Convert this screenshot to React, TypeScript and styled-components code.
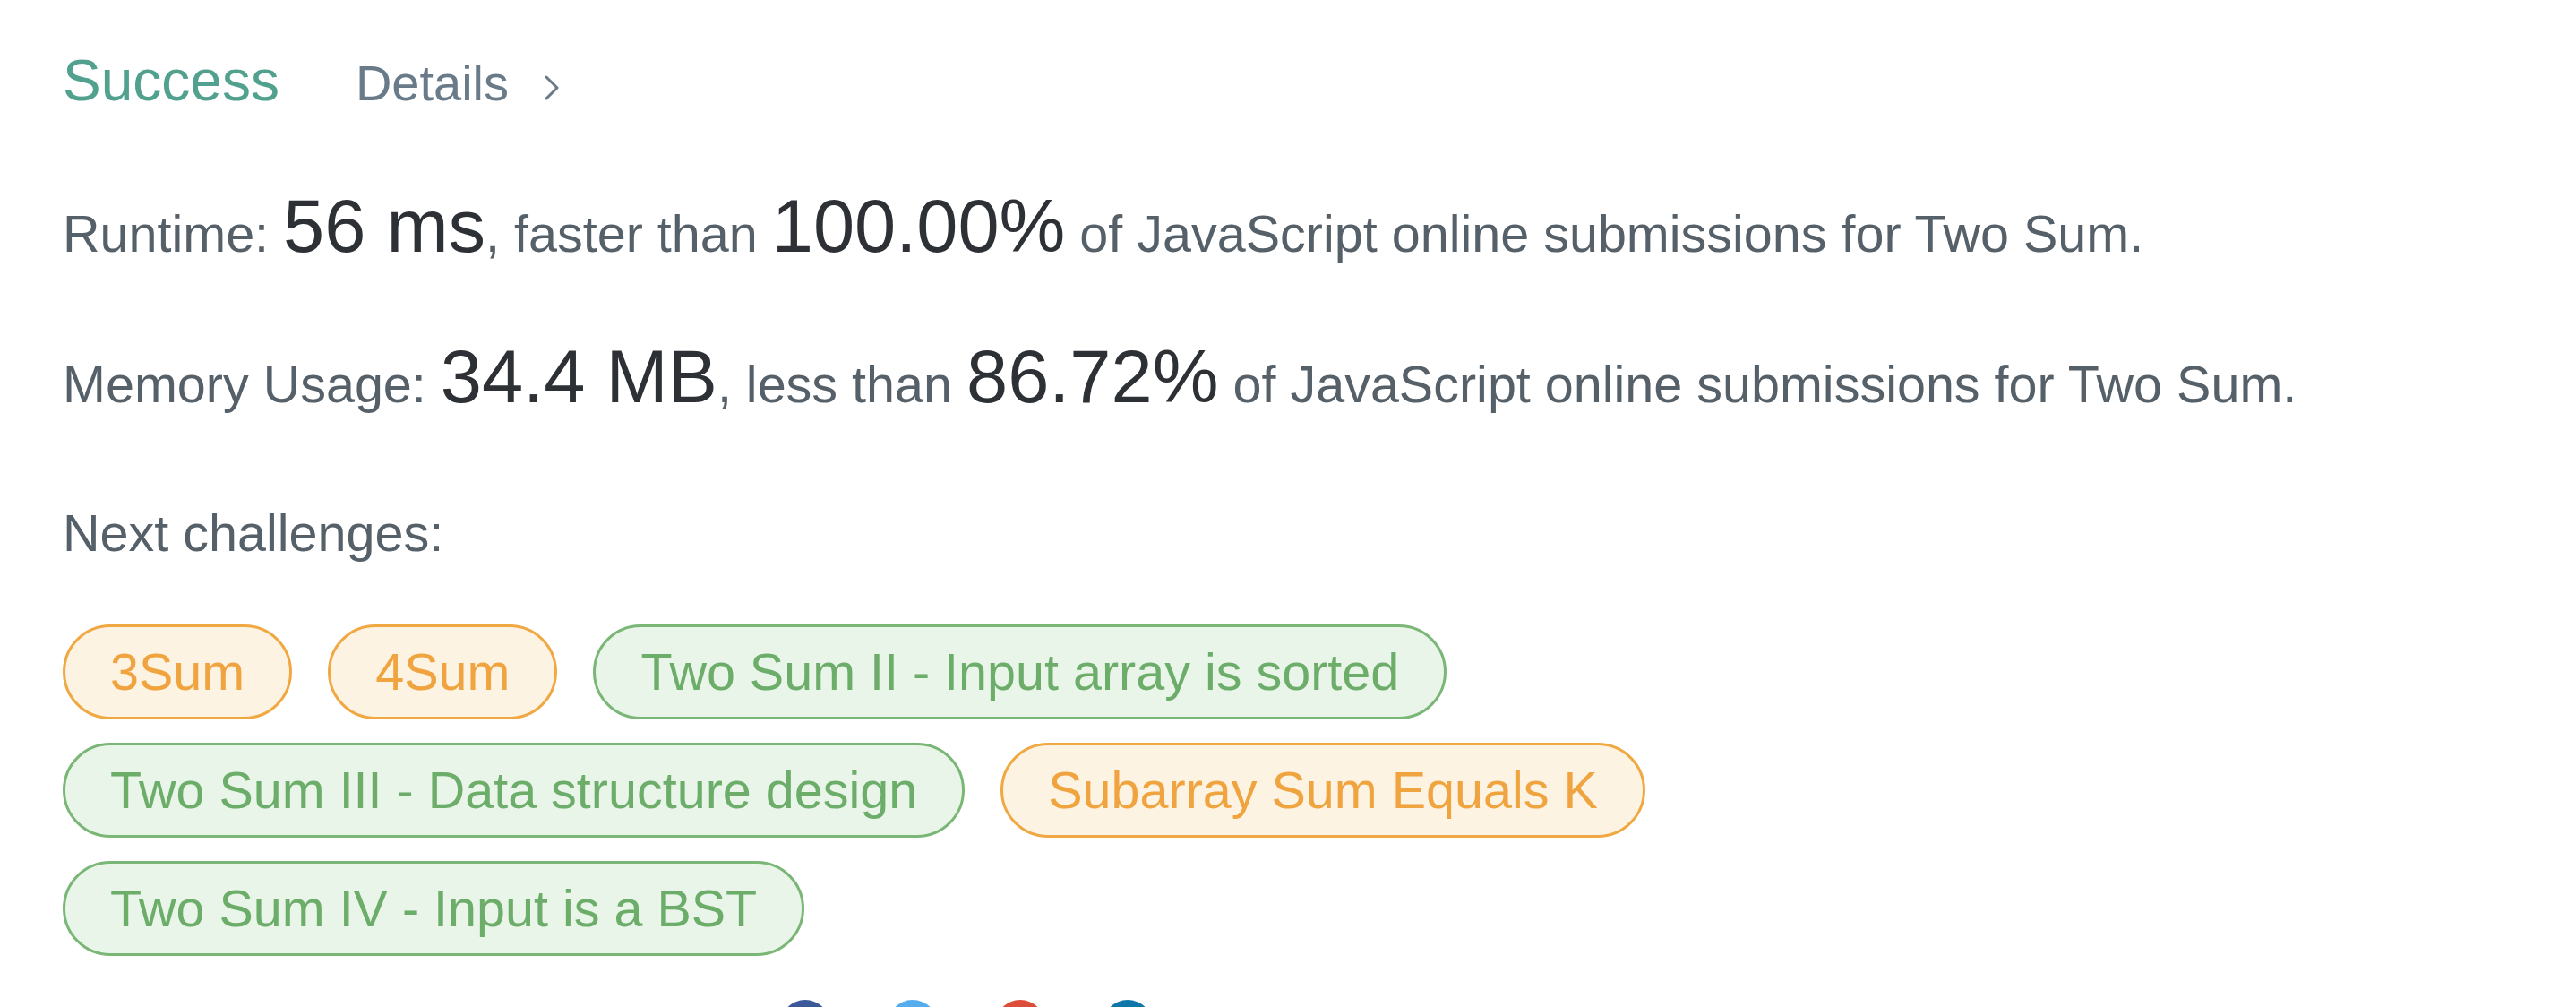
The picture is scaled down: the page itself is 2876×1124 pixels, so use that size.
import styled, { createGlobalStyle } from "styled-components";
import { FaFacebookF, FaTwitter, FaGooglePlusG, FaLinkedinIn } from "react-icons/fa";

type Level = "easy" | "medium";

const challenges: { title: string; level: Level }[] = [
  { title: "3Sum", level: "medium" },
  { title: "4Sum", level: "medium" },
  { title: "Two Sum II - Input array is sorted", level: "easy" },
  { title: "Two Sum III - Data structure design", level: "easy" },
  { title: "Subarray Sum Equals K", level: "medium" },
  { title: "Two Sum IV - Input is a BST", level: "easy" },
];

const shares = [
  { Icon: FaFacebookF, color: "#3b5998" },
  { Icon: FaTwitter, color: "#55acee" },
  { Icon: FaGooglePlusG, color: "#dd4b39" },
  { Icon: FaLinkedinIn, color: "#0e76a8" },
];

const palette = {
  easy: { border: "#7ab777", text: "#6cad6a", bg: "#eaf5ea" },
  medium: { border: "#f0a843", text: "#f0a440", bg: "#fdf3e2" },
};

export default function App() {
  return (
    <>
      <GlobalStyle />
      <Page>
        <Header>
          <Status>Success</Status>
          <DetailsLink>
            Details
            <Chevron viewBox="0 0 16 28">
              <polyline points="2,2 14,14 2,26" />
            </Chevron>
          </DetailsLink>
        </Header>

        <Stat>
          Runtime: <Big>56 ms</Big>, faster than <Big>100.00%</Big> of
          JavaScript online submissions for Two Sum.
        </Stat>
        <Stat>
          Memory Usage: <Big>34.4 MB</Big>, less than <Big>86.72%</Big> of
          JavaScript online submissions for Two Sum.
        </Stat>
        <Stat>Next challenges:</Stat>

        <TagList>
          {challenges.map((c) => (
            <Tag key={c.title} level={c.level}>
              {c.title}
            </Tag>
          ))}
        </TagList>

        <ShareRow>
          {shares.map(({ Icon, color }) => (
            <ShareButton key={color} bg={color}>
              <Icon />
            </ShareButton>
          ))}
        </ShareRow>
      </Page>
    </>
  );
}

const GlobalStyle = createGlobalStyle`
  html, body {
    margin: 0;
    padding: 0;
    background: #ffffff;
    overflow: hidden;
  }
  body {
    font-family: "Liberation Sans", Arial, sans-serif;
  }
`;

const Page = styled.div`
  display: flex;
  flex-direction: column;
  gap: 70px;
  padding: 50px 0 0 70px;
  box-sizing: border-box;
`;

const Header = styled.div`
  display: flex;
  align-items: baseline;
  gap: 85px;
  height: 80px;
  line-height: 80px;
  margin-bottom: 11px;
`;

const Status = styled.span`
  font-size: 64px;
  color: #52a18f;
`;

const DetailsLink = styled.span`
  display: inline-flex;
  align-items: baseline;
  gap: 40px;
  font-size: 56px;
  color: #697a89;
  cursor: pointer;
`;

const Chevron = styled.svg`
  width: 16px;
  height: 28px;
  align-self: center;
  margin-top: 10px;
  fill: none;
  stroke: #697a89;
  stroke-width: 3;
  stroke-linecap: round;
  stroke-linejoin: round;
`;

const Stat = styled.p`
  margin: 0;
  font-size: 57.5px;
  line-height: 96px;
  color: #566069;
  white-space: nowrap;
`;

const Big = styled.span`
  font-size: 83px;
  line-height: 1;
  color: #2d3136;
`;

const TagList = styled.div`
  display: flex;
  flex-wrap: wrap;
  gap: 26px 40px;
  max-width: 2100px;
  margin-top: -16px;
`;

const Tag = styled.span<{ level: Level }>`
  display: inline-flex;
  align-items: center;
  height: 106px;
  box-sizing: border-box;
  padding: 0 50px;
  border-radius: 53px;
  border: 3px solid ${({ level }) => palette[level].border};
  background: ${({ level }) => palette[level].bg};
  color: ${({ level }) => palette[level].text};
  font-size: 57.5px;
  white-space: nowrap;
  cursor: pointer;
`;

const ShareRow = styled.div`
  display: flex;
  gap: 64px;
  margin: -21px 0 0 801px;
`;

const ShareButton = styled.span<{ bg: string }>`
  display: inline-flex;
  align-items: center;
  justify-content: center;
  width: 56px;
  height: 56px;
  border-radius: 50%;
  background: ${({ bg }) => bg};
  color: #ffffff;
  font-size: 28px;
`;
